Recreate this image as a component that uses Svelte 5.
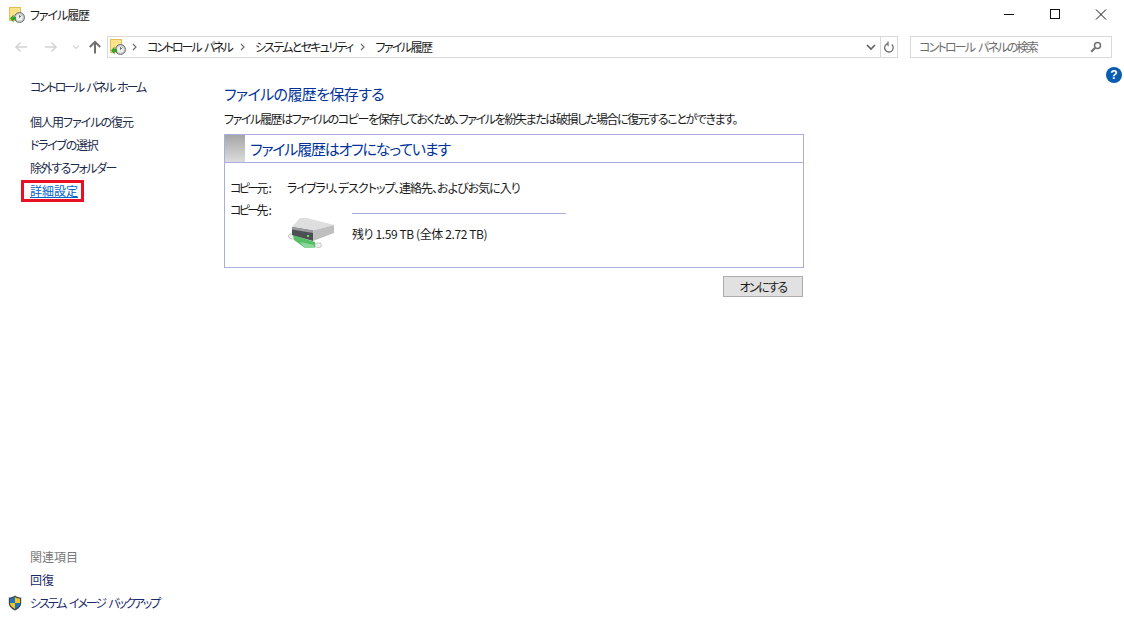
<script>
  const crumbs = [
    { text: 'コントロール パネル', cls: 'ls-crumb' },
    { text: 'システムとセキュリティ', cls: 'ls-17' },
    { text: 'ファイル履歴', cls: 'ls-16' }
  ];
  const tasks = [
    { text: '個人用ファイルの復元', cls: 'ls-10' },
    { text: 'ドライブの選択', cls: 'ls-13' },
    { text: '除外するフォルダー', cls: 'ls-14' }
  ];
</script>

{#snippet fhIcon()}
  <svg class="fh" viewBox="0 0 16 16" width="16" height="16">
    <rect x="0.5" y="0.5" width="11" height="13" fill="#fce28a" stroke="#e5bd52"/>
    <circle cx="10.500" cy="10.500" r="5" fill="#c4c8c6" stroke="#6f7472"/>
    <circle cx="10.500" cy="10.500" r="3.300" fill="#eef0ef"/>
    <path d="M10.500 10.500l2-2M10.500 8v2.500" stroke="#555" fill="none" stroke-width=".8"/>
    <path d="M1 11.500L4.500 7.500v2.500h2.500v3H4.500v2.500z" fill="#36a32e"/>
  </svg>
{/snippet}

<div class="win">
  <header class="title">
    <div class="t-left">
      {@render fhIcon()}
      <span class="ls-11">ファイル履歴</span>
    </div>
    <div class="caption">
      <svg width="46" height="30" viewBox="0 0 46 30"><path d="M18 14.500h10" stroke="#111"/></svg>
      <svg width="46" height="30" viewBox="0 0 46 30"><rect x="18.500" y="9.500" width="9" height="9" fill="none" stroke="#111"/></svg>
      <svg width="46" height="30" viewBox="0 0 46 30"><path d="M18 9.500l10 10M28 9.500l-10 10" stroke="#111" fill="none"/></svg>
    </div>
  </header>

  <nav class="toolbar">
    <div class="nav-btns">
      <svg width="14" height="12" viewBox="0 0 14 12"><path d="M13 6H2M6.500 1.500L2 6l4.500 4.500" fill="none" stroke="#d4d4d4" stroke-width="1.600"/></svg>
      <svg class="fwd" width="14" height="12" viewBox="0 0 14 12"><path d="M1 6h11M7.500 1.500L12 6l-4.500 4.500" fill="none" stroke="#d4d4d4" stroke-width="1.600"/></svg>
      <svg class="drop" width="8" height="6" viewBox="0 0 8 6"><path d="M1 1.500l3 3 3-3" fill="none" stroke="#d4d4d4" stroke-width="1.200"/></svg>
      <svg class="up" width="14" height="14" viewBox="0 0 14 14"><path d="M7 13.500V2M1.800 7L7 1.800 12.200 7" fill="none" stroke="#707070" stroke-width="2"/></svg>
    </div>
    <div class="addr">
      {@render fhIcon()}
      {#each crumbs as c}
        <svg class="chev" width="6" height="8" viewBox="0 0 6 8"><path d="M1 1l3 3-3 3" fill="none" stroke="#707070" stroke-width="1.200"/></svg>
        <span class={c.cls}>{c.text}</span>
      {/each}
      <div class="addr-end">
        <svg width="10" height="7" viewBox="0 0 10 7"><path d="M1 1l4 4 4-4" fill="none" stroke="#606060" stroke-width="1.600"/></svg>
        <div class="refresh">
          <svg width="12" height="13" viewBox="0 0 12 13"><path d="M5 2.500a4.300 4.300 0 1 0 3.800 1M5 .5v4h-.2" fill="none" stroke="#707070" stroke-width="1.300"/></svg>
        </div>
      </div>
    </div>
    <div class="search">
      <span class="ls-search">コントロール パネルの検索</span>
      <svg width="12" height="12" viewBox="0 0 12 12"><circle cx="7.500" cy="4.500" r="3" fill="none" stroke="#707070" stroke-width="1.500"/><path d="M5.200 6.800L1.200 10.800" stroke="#707070" stroke-width="2"/></svg>
    </div>
  </nav>

  <div class="body">
    <aside class="side">
      <div class="side-top">
        <div class="home ls-home">コントロール パネル ホーム</div>
        {#each tasks as t}<div class="task {t.cls}">{t.text}</div>{/each}
        <div class="task"><span class="active">詳細設定</span></div>
      </div>
      <div class="side-bottom">
        <div class="see">関連項目</div>
        <div class="rel">回復</div>
        <div class="rel shieldrow">
          <svg class="shield" width="14" height="16" viewBox="0 0 14 16">
            <path d="M7 .5C5 2 3 2.500 .8 2.500V8c0 3.500 3 6 6.200 7.500 3.200-1.500 6.200-4 6.200-7.500V2.500C11 2.500 9 2 7 .5z" fill="#3d4b57"/>
            <path d="M7 2v6H2V3.800C4 3.700 5.500 3 7 2zM7 8h5c0 2.700-2.500 4.600-5 6z" fill="#1c75bc"/>
            <path d="M7 2c1.500 1 3 1.700 5 1.800V8H7zM2 8h5v6c-2.500-1.400-5-3.300-5-6z" fill="#f6c326"/>
          </svg>
          <span class="ls-image">システム イメージ バックアップ</span>
        </div>
      </div>
    </aside>

    <main class="content">
      <h1>ファイルの履歴を保存する</h1>
      <p class="desc">ファイル履歴はファイルのコピーを保存しておくため、ファイルを紛失または破損した場合に復元することができます。</p>
      <section class="panel">
        <div class="p-head">
          <div class="swatch"></div>
          <h2>ファイル履歴はオフになっています</h2>
        </div>
        <div class="p-body">
          <div class="row src"><span class="lbl"><span class="kana">コピー</span>元:</span><span class="ls-10">ライブラリ、デスクトップ、連絡先、およびお気に入り</span></div>
          <div class="row dst">
            <span class="lbl"><span class="kana">コピー</span>先:</span>
            <div class="drive">
              <svg class="disk" width="48" height="36" viewBox="0 0 48 36">
                <rect x="0.500" y="16" width="7" height="4.500" rx="2.200" transform="rotate(15 3 18)" fill="#ececec" stroke="#a9aea9" stroke-width=".6"/>
                <rect x="27" y="25" width="6.500" height="4.500" rx="2.200" fill="#ececec" stroke="#a9aea9" stroke-width=".6"/>
                <path d="M5 17L27 24V29.500L17 30 6 22z" fill="#55bf65"/>
                <path d="M12 24L26 27V29.500L17 30z" fill="#8ed99a"/>
                <path d="M4 9L12 0 19 0 46 7 25 12.500z" fill="#dedede"/>
                <path d="M25 12.500L46 7V15L25 23z" fill="#bfbfbf"/>
                <path d="M4 9L25 12.500V23L4 17z" fill="#4c4f54"/>
                <path d="M4 9L25 12.500V15L4 11.500z" fill="#9a9c9f"/>
                <rect x="19" y="17" width="2" height="2" fill="#5fe05f"/>
              </svg>
              <div class="info">
                <div class="rule"></div>
                <div class="free">残り 1.59 TB (全体 2.72 TB)</div>
              </div>
            </div>
          </div>
        </div>
      </section>
      <div class="actions"><button>オンにする</button></div>
    </main>

    <div class="help">?</div>
  </div>
</div>

<style>
  :global(body) { margin: 0; background: #fff; }
  .win {
    width: 1124px; height: 634px; display: flex; flex-direction: column;
    font-family: "Noto Sans CJK JP", "Noto Sans", sans-serif;
    font-size: 12px; color: #1a1a1a; font-feature-settings: "palt"; overflow: hidden;
    line-height: 16px; background: #fff;
  }
  .ls-10 { letter-spacing: -1px; }
  .ls-11 { letter-spacing: -1.1px; }
  .ls-13 { letter-spacing: -1.3px; }
  .ls-14 { letter-spacing: -1.45px; }
  .ls-16 { letter-spacing: -1.6px; }
  .ls-17 { letter-spacing: -1.7px; }
  .ls-crumb { letter-spacing: -2.1px; word-spacing: 3px; }
  .ls-search { letter-spacing: -1.8px; word-spacing: 3px; }
  .ls-home { letter-spacing: -2.2px; word-spacing: 3px; }
  .ls-image { letter-spacing: -2.1px; word-spacing: 3px; }
  .title { height: 30px; display: flex; justify-content: space-between; flex: none; }
  .t-left { display: flex; align-items: center; gap: 5px; padding-left: 9px; }
  .caption { display: flex; }
  .caption svg { display: block; }
  .toolbar { height: 34px; flex: none; display: flex; align-items: center; }
  .nav-btns { width: 107px; flex: none; display: flex; align-items: center; padding-left: 14px; box-sizing: border-box; }
  .fwd { margin-left: 16px; }
  .drop { margin-left: 14px; }
  .up { margin-left: 8px; }
  .addr {
    width: 791px; height: 22px; flex: none; box-sizing: border-box; border: 1px solid #d9d9d9;
    display: flex; align-items: center; padding-left: 2px;
  }
  .chev { margin: 0 9px 0 6px; }
  .addr span { margin-right: 2px; }
  .addr-end { margin-left: auto; display: flex; align-items: center; height: 100%; gap: 4px; }
  .refresh { width: 16px; height: 100%; border-left: 1px solid #d9d9d9; display: flex; align-items: center; justify-content: center; }
  .search {
    margin-left: 12px; width: 202px; height: 22px; box-sizing: border-box; border: 1px solid #d9d9d9;
    display: flex; align-items: center; justify-content: space-between; padding: 0 9px 0 8px; color: #6d6d6d;
  }
  .body { flex: 1; display: flex; position: relative; min-height: 0; }
  .side { width: 224px; flex: none; display: flex; flex-direction: column; justify-content: space-between; padding: 15px 0 16px 30px; box-sizing: border-box; }
  .home { color: #1a2a4a; margin-bottom: 19px; }
  .task { color: #1a2a4a; height: 23px; line-height: 16px; }
  .active { color: #0066cc; text-decoration: underline; position: relative; display: inline-block; }
  .active::after { content: ""; position: absolute; left: -9px; right: -6px; top: -3px; bottom: -3px; border: 3px solid #e81123; }
  .see { color: #7a7a7a; height: 23px; }
  .rel { color: #1a2a6a; height: 23px; }
  .shieldrow { position: relative; }
  .shield { position: absolute; left: -22px; top: 0; }
  .content { width: 580px; flex: none; padding-top: 20px; }
  h1 { margin: 0; font-size: 15px; line-height: 20px; font-weight: 400; color: #003399; letter-spacing: -.6px; }
  .desc { margin: 7px 0 0; line-height: 16px; white-space: nowrap; letter-spacing: -1.4px; }
  .panel { margin-top: 7px; border: 1px solid #a9aede; height: 134px; box-sizing: border-box; }
  .p-head { height: 27px; display: flex; border-bottom: 1px solid #a9aede; }
  .swatch { width: 20px; background: linear-gradient(#a6a6a6, #dcdcdc); }
  h2 { margin: 0 0 0 5px; font-size: 15px; line-height: 28px; font-weight: 400; color: #003399; letter-spacing: -1.2px; }
  .p-body { padding: 17px 0 0 5px; }
  .row { display: flex; }
  .lbl { width: 57px; flex: none; letter-spacing: 0; white-space: nowrap; }
  .kana { letter-spacing: -2.6px; }
  .dst { margin-top: 6px; }
  .drive { display: flex; margin-left: 1px; }
  .disk { margin-top: 16px; }
  .info { margin-left: 16px; padding-top: 11px; }
  .rule { width: 214px; height: 1px; background: #a9aede; }
  .free { margin-top: 12px; letter-spacing: -.4px; }
  .actions { display: flex; justify-content: flex-end; margin-top: 8px; padding-right: 1px; }
  button {
    width: 80px; height: 21px; padding: 0; background: #e1e1e1; border: 1px solid #adadad; color: #1a1a1a;
    font: inherit; font-feature-settings: inherit; line-height: 18px; letter-spacing: -1.6px;
  }
  .help {
    position: absolute; left: 1106px; top: 3px; width: 16px; height: 16px; border-radius: 50%;
    background: #0a5cb0; color: #fff; font: 700 12px/16px "Liberation Sans", sans-serif; text-align: center;
  }
</style>
